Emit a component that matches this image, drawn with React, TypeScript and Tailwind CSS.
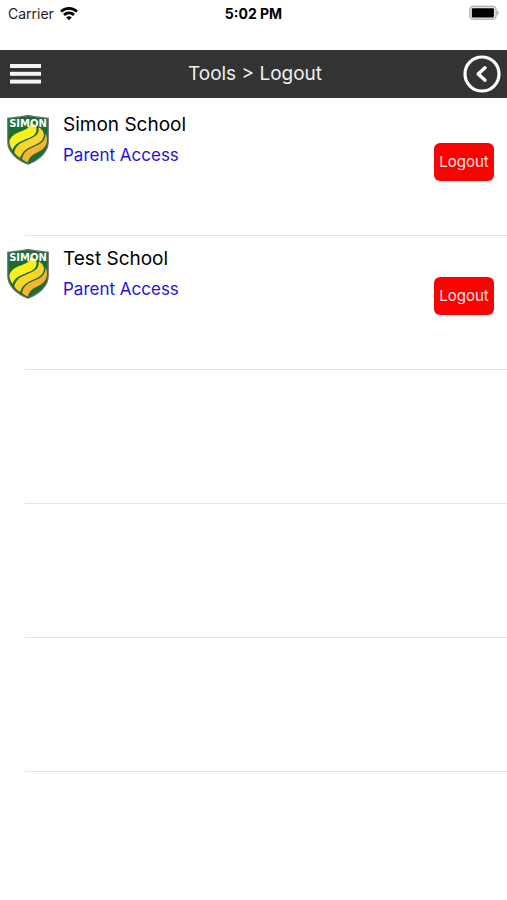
const schools = [
  { name: "Simon School", access: "Parent Access" },
  { name: "Test School", access: "Parent Access" },
];

const emptyRows = [0, 1, 2];

function WifiIcon() {
  return (
    <svg width="18" height="14" viewBox="0 0 18 14" fill="none" stroke="#000" strokeWidth="2.7" aria-hidden="true">
      <path d="M1 4.6C5.4 0.3 12.6 0.3 17 4.6" />
      <path d="M4 8C6.8 5.2 11.2 5.2 14 8" />
      <path d="M9 13.2L6.2 10.4C7.8 9 10.2 9 11.8 10.4Z" fill="#000" stroke="none" />
    </svg>
  );
}

function BatteryIcon() {
  return (
    <svg width="30" height="16" viewBox="0 0 30 16" aria-hidden="true">
      <rect x="0.8" y="1.2" width="26.4" height="13.2" rx="3.8" fill="#e2e2e2" stroke="#b9b9b9" strokeWidth="1.4" />
      <rect x="2.9" y="3.2" width="22" height="9.4" rx="1" fill="#000" />
      <path d="M28 5.4C30.4 6.2 30.4 9.4 28 10.2Z" fill="#b5b5b5" />
    </svg>
  );
}

function MenuIcon() {
  return (
    <svg width="32" height="20" viewBox="0 0 32 20" fill="#f4f4f4" aria-hidden="true">
      <rect x="1" y="0" width="31" height="4" />
      <rect x="1" y="7.8" width="31" height="4" />
      <rect x="1" y="15.6" width="31" height="4" />
    </svg>
  );
}

function BackIcon() {
  return (
    <svg width="38" height="38" viewBox="0 0 38 38" fill="none" stroke="#fff" aria-hidden="true">
      <circle cx="19" cy="19" r="17" strokeWidth="3.2" />
      <path d="M22 12.8L15.2 19L22 25.2" strokeWidth="3.4" strokeLinecap="round" strokeLinejoin="round" />
    </svg>
  );
}

function Crest() {
  return (
    <svg width="42" height="50" viewBox="0 0 42 50" role="img" aria-label="Simon crest" className="mt-0.5 shrink-0">
      <path
        d="M0.8 3.2C7.5 2.7 14 1.6 21 0.7C28 1.6 34.5 2.7 41.2 3.2V27C41.2 37 32 45 21 49.2C10 45 0.8 37 0.8 27Z"
        fill="#1c6b33"
        stroke="#66706a"
        strokeWidth="1.2"
      />
      <path
        d="M2.4 26C4 21.5 7.5 18.8 13 16.8C19 14.6 23.5 12.5 23.8 7.5C29.5 9.5 31.5 15 27.5 19.5C23 24.5 8.5 25 5.6 35C3.4 32 2.3 29 2.4 26Z"
        fill="#fbf01a"
      />
      <path
        d="M7.2 37.2C9 30.5 13 28 19.5 25.4C26.5 22.6 33 20 31.5 12.5C37.5 15 38.6 21.5 34.5 25.8C29 31.5 16.5 31.5 13.2 43C10.6 41.3 8.8 39.6 7.2 37.2Z"
        fill="#fbd528"
      />
      <path
        d="M15 44C16.5 37.5 19.5 35 26 32.2C33 29.2 39 26.5 38.4 18.5C41 23 40.6 30 36 34C30.5 38.5 23 38.5 20.8 47.6C18.6 46.6 16.8 45.6 15 44Z"
        fill="#f8b430"
      />
      <text
        x="21"
        y="12"
        textAnchor="middle"
        fill="#fff"
        className="font-['DejaVu_Sans',sans-serif] text-[10px] font-bold"
      >
        SIMON
      </text>
    </svg>
  );
}

export default function App() {
  return (
    <div className="min-h-screen w-full bg-white font-[Inter,sans-serif] text-black">
      <div className="grid h-[50px] grid-cols-3 items-start px-2 pt-1">
        <div className="flex h-5 items-center gap-1.5">
          <span className="text-sm leading-5 text-[#222]">Carrier</span>
          <WifiIcon />
        </div>
        <time className="text-center text-sm leading-5 font-bold">5:02 PM</time>
        <div className="flex h-[18px] items-center justify-end">
          <BatteryIcon />
        </div>
      </div>

      <header className="grid h-12 grid-cols-[1fr_auto_1fr] items-center bg-[#333] pr-1.5 pl-[9px]">
        <button type="button" aria-label="Menu" className="justify-self-start">
          <MenuIcon />
        </button>
        <h1 className="text-[19px] leading-6 text-[#eee]">Tools &gt; Logout</h1>
        <button type="button" aria-label="Back" className="justify-self-end">
          <BackIcon />
        </button>
      </header>

      <ul className="pt-1">
        {schools.map((school) => (
          <li key={school.name}>
            <div className="flex h-[133px] items-start pt-[11px] pr-[13px] pl-[7px]">
              <Crest />
              <div className="min-w-0 flex-1 pl-3.5">
                <h2 className="text-[19px] leading-6">{school.name}</h2>
                <a href="#" className="mt-2 block text-[17px] leading-5 text-[#1c14e0]">
                  {school.access}
                </a>
              </div>
              <button
                type="button"
                className="mt-[30px] h-[38px] w-[60px] shrink-0 rounded-md bg-[#fd0000] text-[15px] text-[#ffe5e5]"
              >
                Logout
              </button>
            </div>
            <hr className="ml-[25px] border-t border-[#e3e3e3]" />
          </li>
        ))}
        {emptyRows.map((row) => (
          <li key={row} aria-hidden="true">
            <div className="h-[133px]" />
            <hr className="ml-[25px] border-t border-[#e3e3e3]" />
          </li>
        ))}
      </ul>
    </div>
  );
}
